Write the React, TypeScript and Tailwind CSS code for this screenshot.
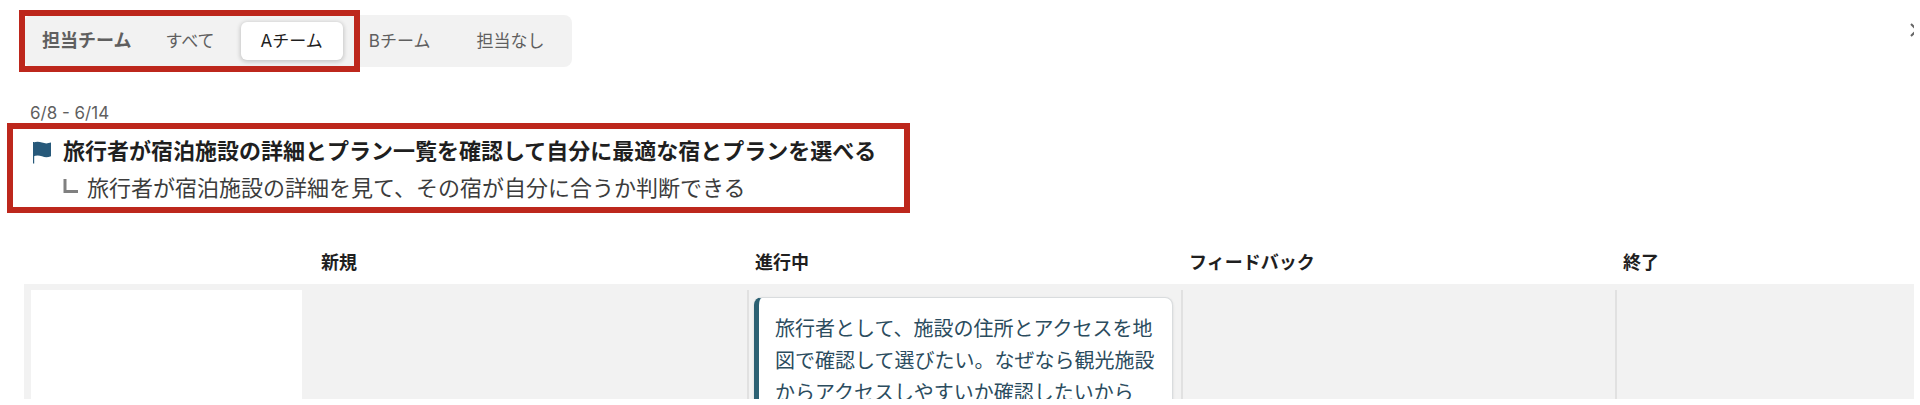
import { useState } from "react";

const teams = ["すべて", "Aチーム", "Bチーム", "担当なし"];
const columns = ["新規", "進行中", "フィードバック", "終了"];
const story =
  "旅行者として、施設の住所とアクセスを地図で確認して選びたい。なぜなら観光施設からアクセスしやすいか確認したいから";

function TeamFilter() {
  const [active, setActive] = useState("Aチーム");
  return (
    <div className="relative flex w-fit items-center rounded-lg bg-[#f2f2f2] py-[7px] pr-2 pl-[18px] text-[17px] leading-6 text-[#5f5f5f]">
      <span id="team-label" className="mr-3.5 text-[18px] font-bold">担当チーム</span>
      <div role="group" aria-labelledby="team-label" className="flex gap-1.5">
        {teams.map((team) => (
          <button
            key={team}
            type="button"
            aria-pressed={team === active}
            onClick={() => setActive(team)}
            className={
              team === active
                ? "rounded-md bg-white px-5 py-[7px] text-[#1f1f1f] shadow-[0_1px_4px_1px_rgba(0,0,0,0.18)]"
                : "rounded-md px-5 py-[7px]"
            }
          >
            {team}
          </button>
        ))}
      </div>
      <div className="pointer-events-none absolute -top-[5px] -left-[5px] h-[62px] w-[341px] border-6 border-[#bd271c]" />
    </div>
  );
}

function Goal() {
  return (
    <section className="relative ml-[7px] w-fit border-6 border-[#bd271c] pt-1 pr-7 pl-[18px] text-[22px] leading-[37px]">
      <h1 className="flex items-center gap-3 font-bold text-[#1f1f1f]">
        <svg viewBox="0 0 20 24" className="h-6 w-5 fill-[#27597a]" aria-hidden="true">
          <path d="M2 2h1.200v21.500H2z" />
          <path d="M2 2.800C5 1.400 8 1.500 11 2.600s5.500 1.100 9 0v13.600c-3.500 1.500-6 1.300-9 .1s-6-1.300-9 .3z" />
        </svg>
        旅行者が宿泊施設の詳細とプラン一覧を確認して自分に最適な宿とプランを選べる
      </h1>
      <p className="flex items-center gap-2 pl-8 text-[#3c3c3c]">
        <svg viewBox="0 0 16 24" className="h-6 w-4 fill-none stroke-[#808080] stroke-3" aria-hidden="true">
          <path d="M2 2v12.500h13" />
        </svg>
        旅行者が宿泊施設の詳細を見て、その宿が自分に合うか判断できる
      </p>
    </section>
  );
}

function Board() {
  return (
    <main className="mt-9 ml-6 overflow-hidden">
      <div className="flex pl-[289px] text-[18px] leading-7 font-bold text-[#1f1f1f]">
        {columns.map((name) => (
          <h2 key={name} className="w-[434px] shrink-0 pl-2">{name}</h2>
        ))}
      </div>
      <div className="mt-[7px] flex h-[115px] overflow-hidden bg-[#f2f2f2] pt-1.5">
        <div className="mr-[11px] ml-[7px] w-[271px] shrink-0 bg-white" />
        {columns.map((name, i) => (
          <div
            key={name}
            className={
              i === 0
                ? "w-[434px] shrink-0"
                : "w-[434px] shrink-0 border-l-2 border-[#e1e1e1]"
            }
          >
            {name === "進行中" && (
              <article className="mt-[7px] mr-2 ml-[5px] rounded-lg border border-l-5 border-[#d9dcde] border-l-[#2b6072] bg-white px-4 py-[15px] text-[20px] leading-8 text-[#2b4c5e] shadow-sm">
                {story}
              </article>
            )}
          </div>
        ))}
      </div>
    </main>
  );
}

export default function App() {
  return (
    <div className="overflow-hidden bg-white pr-1.5 pb-1.5 font-['Inter','Noto_Sans_CJK_JP',sans-serif]">
      <header className="flex items-start justify-between pt-[15px] pl-6">
        <TeamFilter />
        <button type="button" aria-label="閉じる" className="mt-2 flex w-1 overflow-hidden">
          <svg viewBox="0 0 14 14" className="size-3.5 shrink-0 fill-none stroke-[#666] stroke-2" aria-hidden="true">
            <path d="M1 1l12 12M1 13L13 1" />
          </svg>
        </button>
      </header>
      <p className="mt-[34px] ml-[30px] h-[22px] text-[17px] leading-6 text-[#5f5f5f]">6/8 - 6/14</p>
      <Goal />
      <Board />
    </div>
  );
}
